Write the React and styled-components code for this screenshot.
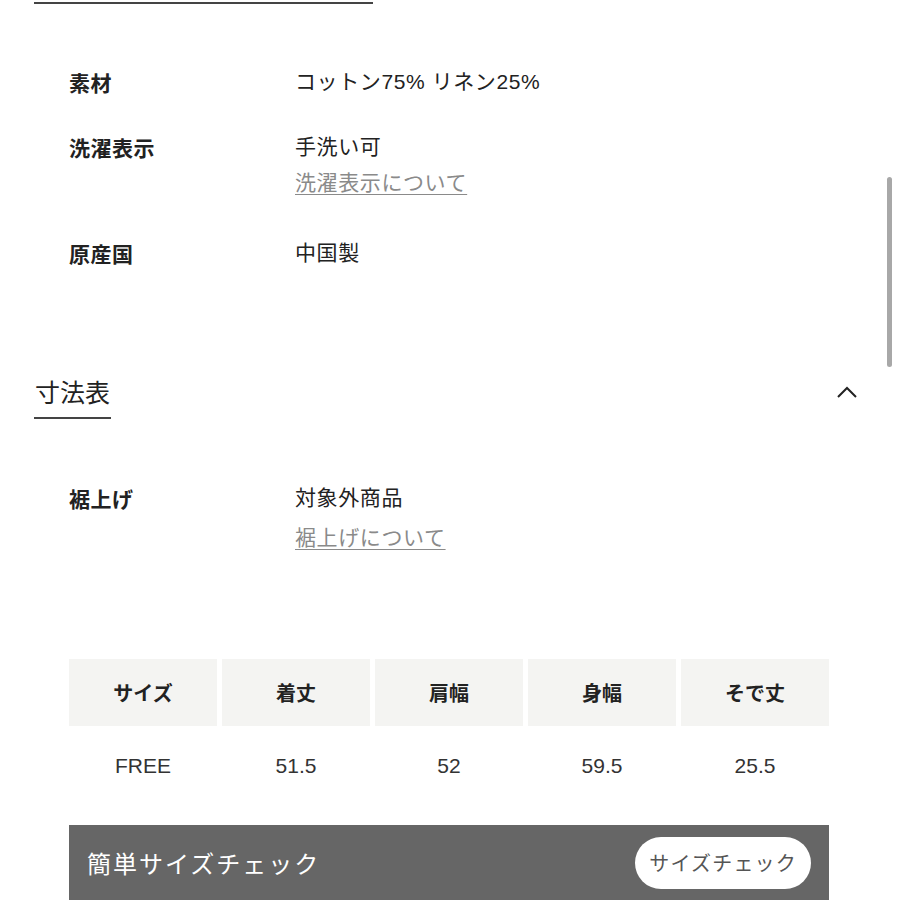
import React from "react";
import styled, { createGlobalStyle } from "styled-components";

const GlobalStyle = createGlobalStyle`
  html, body {
    margin: 0;
    padding: 0;
    background: #fff;
  }
  body {
    font-family: "Liberation Sans", "Noto Sans CJK JP", sans-serif;
    color: #222;
  }
`;

const Page = styled.div`
  position: relative;
  width: 900px;
  height: 900px;
  overflow: hidden;
  padding: 2px 34px 0;
  box-sizing: border-box;
`;

const TopRule = styled.div`
  width: 339px;
  height: 2px;
  background: #444;
`;

const SpecList = styled.dl`
  margin: ${(p) => p.$top || 0}px 0 0;
  padding-left: 35px;
`;

const SpecRow = styled.div`
  display: grid;
  grid-template-columns: 226px 1fr;
  margin-bottom: ${(p) => p.$gap || 0}px;
`;

const Label = styled.dt`
  font-family: "Noto Sans CJK JP", sans-serif;
  font-size: 21px;
  font-weight: 700;
  line-height: 36px;
  letter-spacing: 0.5px;
`;

const Value = styled.dd`
  margin: 0;
  font-size: 21px;
  line-height: 36px;
  letter-spacing: 0.6px;
  display: flex;
  flex-direction: column;
  align-items: flex-start;
`;

const InfoLink = styled.a`
  color: #8a8a8a;
  text-decoration: underline;
  text-underline-offset: 4px;
  text-decoration-thickness: 1px;
  margin-top: ${(p) => p.$shift || 0}px;
`;

const SectionHead = styled.div`
  display: flex;
  justify-content: space-between;
  align-items: center;
  margin-top: 103px;
`;

const SectionTitle = styled.h2`
  margin: 0;
  font-family: "Noto Sans CJK JP", sans-serif;
  font-size: 25px;
  font-weight: 400;
  line-height: 34px;
  padding: 0 1px 9px 1px;
  border-bottom: 2px solid #444;
`;

const Chevron = styled.svg`
  margin-right: 8px;
  margin-bottom: 10px;
`;

const SizeTable = styled.div`
  margin: 103px 0 0 35px;
  width: 760px;
  display: grid;
  grid-template-columns: repeat(5, 1fr);
  column-gap: 5px;
`;

const HeadCell = styled.div`
  height: 67px;
  background: #f4f4f2;
  display: flex;
  align-items: center;
  justify-content: center;
  font-family: "Noto Sans CJK JP", sans-serif;
  font-size: 20px;
  font-weight: 700;
`;

const DataCell = styled.div`
  height: 80px;
  display: flex;
  align-items: center;
  justify-content: center;
  font-size: 21px;
  color: #333;
`;

const CheckBar = styled.div`
  margin: 19px 0 0 35px;
  width: 760px;
  height: 75px;
  background: #666;
  display: flex;
  align-items: center;
  justify-content: space-between;
  padding: 0 18px;
  box-sizing: border-box;
`;

const CheckTitle = styled.span`
  font-family: "Noto Sans CJK JP", sans-serif;
  color: #fff;
  font-size: 24px;
  letter-spacing: 2px;
`;

const CheckButton = styled.button`
  height: 52px;
  padding: 0 14px;
  border: none;
  border-radius: 26px;
  background: #fff;
  color: #555;
  font-family: "Noto Sans CJK JP", sans-serif;
  font-size: 20px;
  letter-spacing: 1.2px;
`;

const ScrollThumb = styled.div`
  position: absolute;
  left: 887px;
  top: 177px;
  width: 5px;
  height: 190px;
  border-radius: 3px;
  background: #a8a8a8;
`;

const specs = [
  { label: "素材", value: "コットン75% リネン25%", gap: 29 },
  { label: "洗濯表示", value: "手洗い可", link: "洗濯表示について", gap: 34 },
  { label: "原産国", value: "中国製" },
];

const heads = ["サイズ", "着丈", "肩幅", "身幅", "そで丈"];
const sizes = ["FREE", "51.5", "52", "59.5", "25.5"];

export default function App() {
  return (
    <>
      <GlobalStyle />
      <Page>
        <TopRule />
        <SpecList $top={60}>
          {specs.map((s) => (
            <SpecRow key={s.label} $gap={s.gap}>
              <Label>{s.label}</Label>
              <Value>
                <span>{s.value}</span>
                {s.link && <InfoLink>{s.link}</InfoLink>}
              </Value>
            </SpecRow>
          ))}
        </SpecList>

        <SectionHead>
          <SectionTitle>寸法表</SectionTitle>
          <Chevron width="22" height="14" viewBox="0 0 22 14">
            <path d="M2 12 L11 3 L20 12" fill="none" stroke="#222" strokeWidth="2" />
          </Chevron>
        </SectionHead>

        <SpecList $top={61}>
          <SpecRow>
            <Label>裾上げ</Label>
            <Value>
              <span>対象外商品</span>
              <InfoLink $shift={4}>裾上げについて</InfoLink>
            </Value>
          </SpecRow>
        </SpecList>

        <SizeTable>
          {heads.map((h) => (
            <HeadCell key={h}>{h}</HeadCell>
          ))}
          {sizes.map((v, i) => (
            <DataCell key={i}>{v}</DataCell>
          ))}
        </SizeTable>

        <CheckBar>
          <CheckTitle>簡単サイズチェック</CheckTitle>
          <CheckButton>サイズチェック</CheckButton>
        </CheckBar>

        <ScrollThumb />
      </Page>
    </>
  );
}
